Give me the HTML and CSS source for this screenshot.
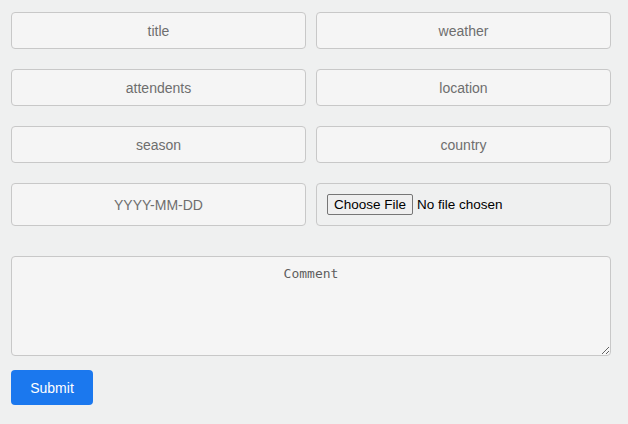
FILE: index.html
```html
<!DOCTYPE html>
<html>
<head>
<meta charset="utf-8">
<link rel="stylesheet" href="styles.css">
</head>
<body>
<form class="form">
  <div class="grid">
    <input class="field" type="text" placeholder="title">
    <input class="field" type="text" placeholder="weather">
    <input class="field" type="text" placeholder="attendents">
    <input class="field" type="text" placeholder="location">
    <input class="field" type="text" placeholder="season">
    <input class="field" type="text" placeholder="country">
    <input class="field tall" type="text" placeholder="YYYY-MM-DD">
    <input class="field tall file" type="file">
  </div>
  <textarea class="comment" placeholder="Comment"></textarea>
  <button class="submit" type="button">Submit</button>
</form>
</body>
</html>
```

FILE: styles.css
```css
html, body {
  margin: 0;
  background: #eff0f0;
}
body {
  padding: 12px 11px;
  font-family: "Liberation Sans", Arial, sans-serif;
}
.form {
  width: 600px;
  display: flex;
  flex-direction: column;
  align-items: flex-start;
}
.grid {
  width: 600px;
  display: grid;
  grid-template-columns: 295px 295px;
  column-gap: 10px;
  row-gap: 20px;
}
.field {
  box-sizing: border-box;
  width: 295px;
  height: 37px;
  margin: 0;
  border: 1px solid #c8c8c8;
  border-radius: 4px;
  background: #f5f5f5;
  font-family: "Liberation Sans", Arial, sans-serif;
  font-size: 14px;
  color: #555;
  text-align: center;
  outline: none;
}
.field::placeholder {
  color: #6e6e6e;
}
.tall {
  height: 43px;
}
.file {
  background: #eff0f0;
  text-align: left;
  padding: 10px 10px;
  color: #000;
  font-size: 13.5px;
}
.file::file-selector-button {
  font-family: "Liberation Sans", Arial, sans-serif;
  font-size: 13.5px;
  color: #000;
  background: #efefef;
  border: 1px solid #767676;
  border-radius: 2px;
  padding: 1px 6px;
  margin-right: 4px;
  height: 21px;
}
.comment {
  box-sizing: border-box;
  width: 600px;
  height: 100px;
  margin: 30px 0 0 0;
  border: 1px solid #c8c8c8;
  border-radius: 4px;
  background: #f5f5f5;
  font-family: "DejaVu Sans Mono", monospace;
  font-size: 13px;
  text-align: center;
  padding: 9px 8px;
  outline: none;
}
.comment::placeholder {
  color: #5e5e5e;
}
.submit {
  margin-top: 14px;
  width: 82px;
  height: 35px;
  border: none;
  border-radius: 4px;
  background: #1b78ee;
  color: #fff;
  font-family: "Liberation Sans", Arial, sans-serif;
  font-size: 14px;
  cursor: pointer;
}
```
